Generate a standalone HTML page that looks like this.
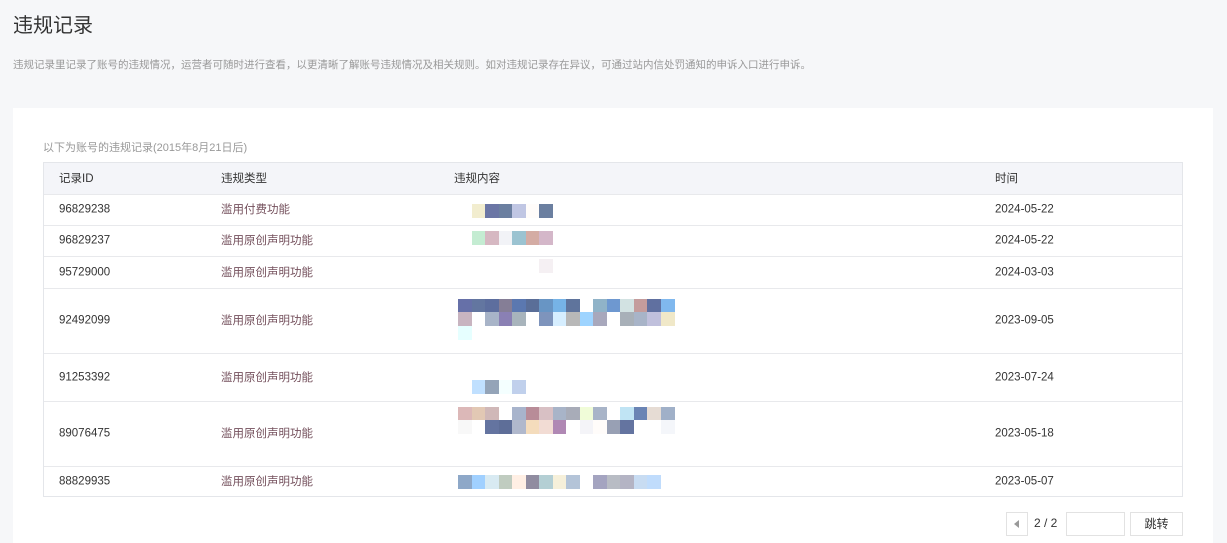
<!DOCTYPE html>
<html><head><meta charset="utf-8"><style>
*{margin:0;padding:0;box-sizing:border-box}
body{width:1227px;height:543px;overflow:hidden;background:#f6f7f9;font-family:"Liberation Sans","Noto Sans CJK SC",sans-serif;position:relative}
.t{position:absolute;left:13px;top:9px;font-size:20px;color:#333}
.d{position:absolute;left:13px;top:57px;font-size:10.5px;color:#999}
.card{position:absolute;left:13px;top:108px;width:1200px;height:435px;background:#fff}
.cap{position:absolute;left:43px;top:139px;font-size:11px;color:#999}
.tb{position:absolute;left:43px;top:162px;width:1140px;height:335px;border:1px solid #e4e6ea}
.r{position:absolute;left:0;width:1138px;border-top:1px solid #e8e9ec;font-size:11.5px;color:#333}
.r span{position:absolute;top:50%;transform:translateY(-55%)}
.h{background:#f4f5f9;border-top:none}
.c1{left:15px}.c2{left:177px}.c3{left:410px}.c4{left:951px}
.ty{color:#74505c}
.b{position:absolute;width:14px;height:14px}
.pg{position:absolute;top:512px;height:24px;border:1px solid #e2e2e2;background:#fff;font-size:12px;color:#333}
</style></head><body>
<div class="t">违规记录</div>
<div class="d">违规记录里记录了账号的违规情况，运营者可随时进行查看，以更清晰了解账号违规情况及相关规则。如对违规记录存在异议，可通过站内信处罚通知的申诉入口进行申诉。</div>
<div class="card"></div>
<div class="cap">以下为账号的违规记录(2015年8月21日后)</div>
<div class="tb">
<div class="r h" style="top:0;height:31px"><span class="c1">记录ID</span><span class="c2">违规类型</span><span class="c3">违规内容</span><span class="c4">时间</span></div>
<div class="r" style="top:31px;height:31px"><span class="c1">96829238</span><span class="c2 ty">滥用付费功能</span><span class="c4">2024-05-22</span></div>
<div class="r" style="top:62px;height:31px"><span class="c1">96829237</span><span class="c2 ty">滥用原创声明功能</span><span class="c4">2024-05-22</span></div>
<div class="r" style="top:93px;height:32px"><span class="c1">95729000</span><span class="c2 ty">滥用原创声明功能</span><span class="c4">2024-03-03</span></div>
<div class="r" style="top:125px;height:65px"><span class="c1">92492099</span><span class="c2 ty">滥用原创声明功能</span><span class="c4">2023-09-05</span></div>
<div class="r" style="top:190px;height:48px"><span class="c1">91253392</span><span class="c2 ty">滥用原创声明功能</span><span class="c4">2023-07-24</span></div>
<div class="r" style="top:238px;height:65px"><span class="c1">89076475</span><span class="c2 ty">滥用原创声明功能</span><span class="c4">2023-05-18</span></div>
<div class="r" style="top:303px;height:31px"><span class="c1">88829935</span><span class="c2 ty">滥用原创声明功能</span><span class="c4">2023-05-07</span></div>
</div>
<div id="px"></div>
<div class="pg" style="left:1006px;width:22px"><div style="position:absolute;left:7px;top:7px;width:0;height:0;border-top:4px solid transparent;border-bottom:4px solid transparent;border-right:5px solid #999"></div></div>
<div style="position:absolute;left:1034px;top:516px;font-size:12px;color:#333">2 / 2</div>
<div class="pg" style="left:1066px;width:59px"></div>
<div class="pg" style="left:1130px;width:53px;text-align:center;line-height:22px">跳转</div>
<script>
var rows=[[204,1,"f2edcf,6b76a5,6b7fa0,c0c6e3,fffcfa,6b7fa0"],[231,1,"c4ecd2,d6b8c2,f2f3f7,9bc3d1,d4aca4,d4b7c9"],[259,6,"f5f0f3"],
[299,0,"6670a8,6376a0,5d6e9e,857e96,5b78b0,5a6e98,6895c4,76b3e6,5f749c,fff,90b3c8,6e98d0,d2e2e2,c49c9c,6070a0,80b8ee"],
[312,0,"c8b4c0,fff,a8b4c8,8a80b4,a8b4bc,fff,7e94bc,d6eeff,b8b8b8,9ed4ff,a8a8bc,fff,a8b0b8,a8b4c8,c0c0dc,f0e8c8"],
[326,0,"e6ffff"],[380,1,"c0e0ff,94a4b8,f4ffff,c0d0ec"],
[407,0,"dcb8b8,e2c8b4,d0b8b8,fff,a8b4cc,b88c98,d8c0c4,a8b4c8,a8acb8,f0fcd8,a8b4c8,fff,c0e4f4,6a84b4,e6dcd4,a0b0c8"],
[420,0,"f8f8f8,fff,6474a0,5e6e98,b0b8cc,f4dcbc,f2dcd4,b088b4,fff,f4f4f8,fffcfa,98a0b4,6474a0,fff,fff,f4f6fa"],
[475,0,"8ea8c8,a0d0ff,d8eaf2,c0ccc0,ffefe4,908ca0,b4cfd4,f6f0da,b4c4d8,fff,a4a4c0,b8bcc4,b4b4c4,c8dcf2,c0dcfc"]];
var h="";rows.forEach(function(r){r[2].split(",").forEach(function(c,i){h+='<div class="b" style="left:'+(458+13.5*(r[1]+i))+'px;top:'+r[0]+'px;background:#'+c+'"></div>';});});
document.getElementById("px").innerHTML=h;
</script>
</body></html>
